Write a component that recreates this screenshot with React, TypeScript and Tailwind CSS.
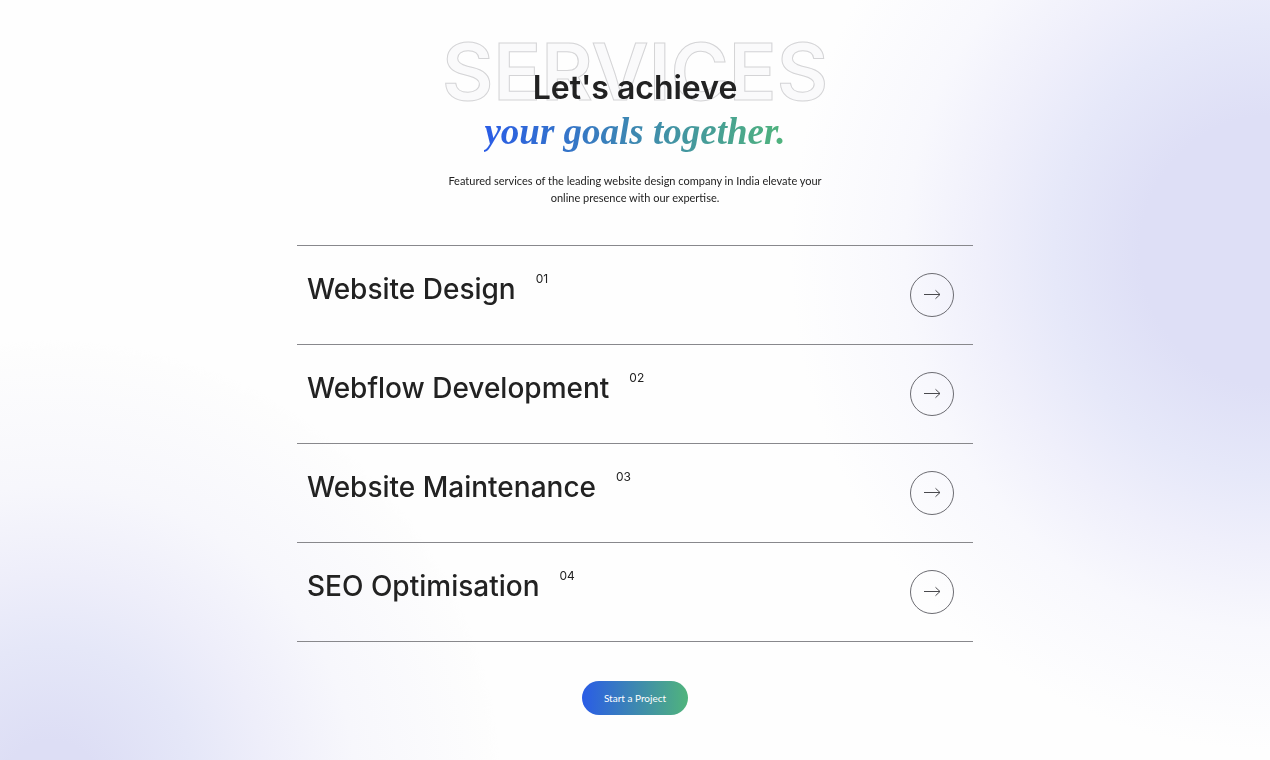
interface Service {
  id: string;
  title: string;
}

const services: Service[] = [
  { id: "01", title: "Website Design" },
  { id: "02", title: "Webflow Development" },
  { id: "03", title: "Website Maintenance" },
  { id: "04", title: "SEO Optimisation" },
];

const ArrowCircle = () => (
  <span className="flex size-11 shrink-0 items-center justify-center rounded-full border border-[#6c6c72]">
    <svg
      width="18"
      height="12"
      viewBox="0 0 18 12"
      fill="none"
      stroke="#4a4a4e"
      aria-hidden="true"
    >
      <path d="M1 5.5h16M12.5 1.3 17 5.5l-4.5 4.2" />
    </svg>
  </span>
);

const ServiceRow = ({ service }: { service: Service }) => (
  <li className="border-b border-[#88888c]">
    <a href={`#service-${service.id}`} className="flex h-[98px] items-center justify-between pl-2.5 pr-[19px]">
      <span className="flex gap-5 pb-3">
        <span className="text-[28px] font-medium leading-10">{service.title}</span>
        <span className="text-xs leading-5">{service.id}</span>
      </span>
      <ArrowCircle />
    </a>
  </li>
);

const App = () => {
  return (
    <main className="relative isolate min-h-screen overflow-hidden bg-[#fefefe] px-6 pb-11 pt-[66px] font-['Inter',sans-serif] text-[#222]">
      {/* soft corner glows */}
      <div className="absolute inset-0 -z-20 bg-[radial-gradient(ellipse_480px_500px_at_100%_33%,#dedff6_27%,#e6e8f9_45%,#efeffb_59%,#f8f8fd_76%,#fefefe_100%)]" />
      <div className="absolute inset-0 -z-20 bg-[radial-gradient(circle_at_4%_104%,#dedff6_50px,#e6e8f9_145px,#efeffb_215px,#f8f8fd_305px,#fefefe_440px,transparent_450px)] mix-blend-multiply" />

      <header className="relative flex flex-col items-center text-center">
        <div
          aria-hidden="true"
          className="absolute -top-10 left-1/2 -z-10 -translate-x-1/2 text-[79px] font-semibold leading-[90px] text-[#fafafb] [-webkit-text-stroke:1px_#d4d4d6]"
        >
          SERVICES
        </div>
        <h2 className="text-[32px] font-semibold leading-[44px]">
          Let's achieve
          <span className="block bg-linear-to-r/srgb from-[#2a5ce6] to-[#50b47c] bg-clip-text font-['Liberation_Serif',serif] text-[37px] font-bold italic text-transparent">
            your goals together.
          </span>
        </h2>
        <p className="mt-[18px] max-w-[390px] font-['Lato',sans-serif] text-[11px] leading-[17px]">
          Featured services of the leading website design company in India elevate your online
          presence with our expertise.
        </p>
      </header>

      <ul className="mx-auto mt-[39px] max-w-[676px] border-t border-[#88888c]">
        {services.map((service) => (
          <ServiceRow key={service.id} service={service} />
        ))}
      </ul>

      <div className="mt-[39px] flex justify-center">
        <button
          type="button"
          className="h-[34px] rounded-full bg-linear-to-r/srgb from-[#2a5ce6] to-[#50b47c] px-[22px] font-['Lato',sans-serif] text-[10px] text-white"
        >
          Start a Project
        </button>
      </div>
    </main>
  );
};

export default App;
